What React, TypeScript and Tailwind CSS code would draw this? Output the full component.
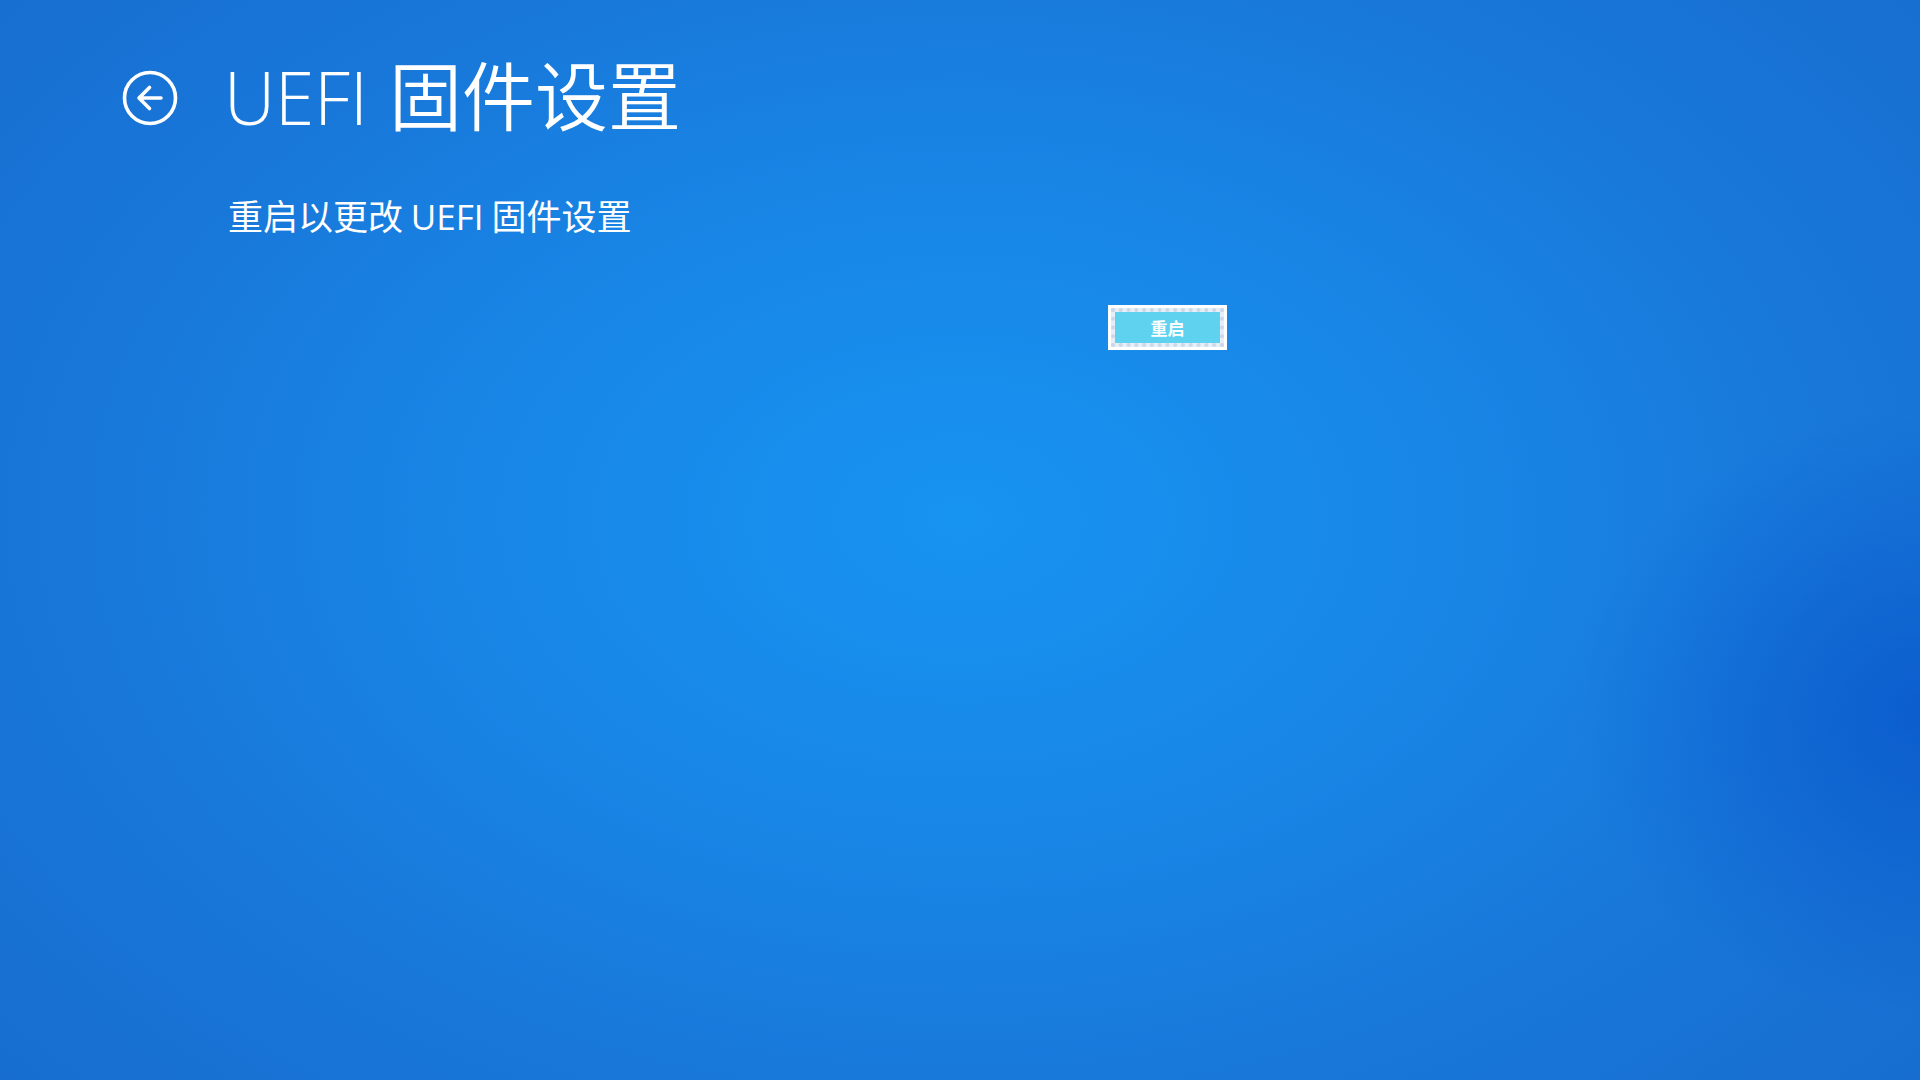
import React from "react";

export default function App() {
  return (
    <div className="relative w-[1920px] h-[1080px] overflow-hidden bg-[radial-gradient(ellipse_72%_85%_at_50%_48%,#1793f1_0%,#1886e6_35%,#1877d9_65%,#166bcd_100%)] font-['Noto_Sans_CJK_SC','Noto_Sans',sans-serif] text-white">
      <div className="absolute inset-0 bg-[radial-gradient(ellipse_18%_28%_at_100%_66%,rgba(4,78,200,0.6)_0%,rgba(4,78,200,0)_100%)]" />
      <div className="relative flex flex-col pl-[122px] pt-[55px]">
        <div className="flex items-start gap-[46px]">
          <svg width="56" height="56" viewBox="0 0 56 56" className="shrink-0 mt-[15px]">
            <circle cx="28" cy="28" r="25.5" fill="none" stroke="white" strokeWidth="3.6" />
            <path d="M39 28 H17 M27.5 17.5 L17 28 L27.5 38.5" fill="none" stroke="white" strokeWidth="3.6" strokeLinecap="round" strokeLinejoin="round" />
          </svg>
          <h1 className="text-[73px] font-[350] leading-none scale-y-[1.03] origin-top font-['Noto_Sans_CJK_SC','Noto_Sans',sans-serif] whitespace-nowrap">
            <span className="font-['Open_Sans','Noto_Sans',sans-serif] font-light text-[71px] mr-[5px]">UEFI</span> 固件设置
          </h1>
        </div>
        <div className="pl-[106px] mt-[66px]">
          <p className="text-[35px] font-normal leading-none whitespace-nowrap">
            重启以更改 <span className="font-['Open_Sans','Noto_Sans',sans-serif]">UEFI</span> 固件设置
          </p>
        </div>
        <div className="flex pl-[986px] mt-[71px]">
          <button className="w-[119px] h-[45px] bg-white p-[3px]">
            <div className="w-full h-full border-[4px] border-dotted border-[#c9d8ea] bg-[#e8eef5]">
              <div className="w-full h-full bg-[#5fd2f0] flex items-center justify-center">
                <span className="text-[17px] font-bold leading-none text-white">重启</span>
              </div>
            </div>
          </button>
        </div>
      </div>
    </div>
  );
}
